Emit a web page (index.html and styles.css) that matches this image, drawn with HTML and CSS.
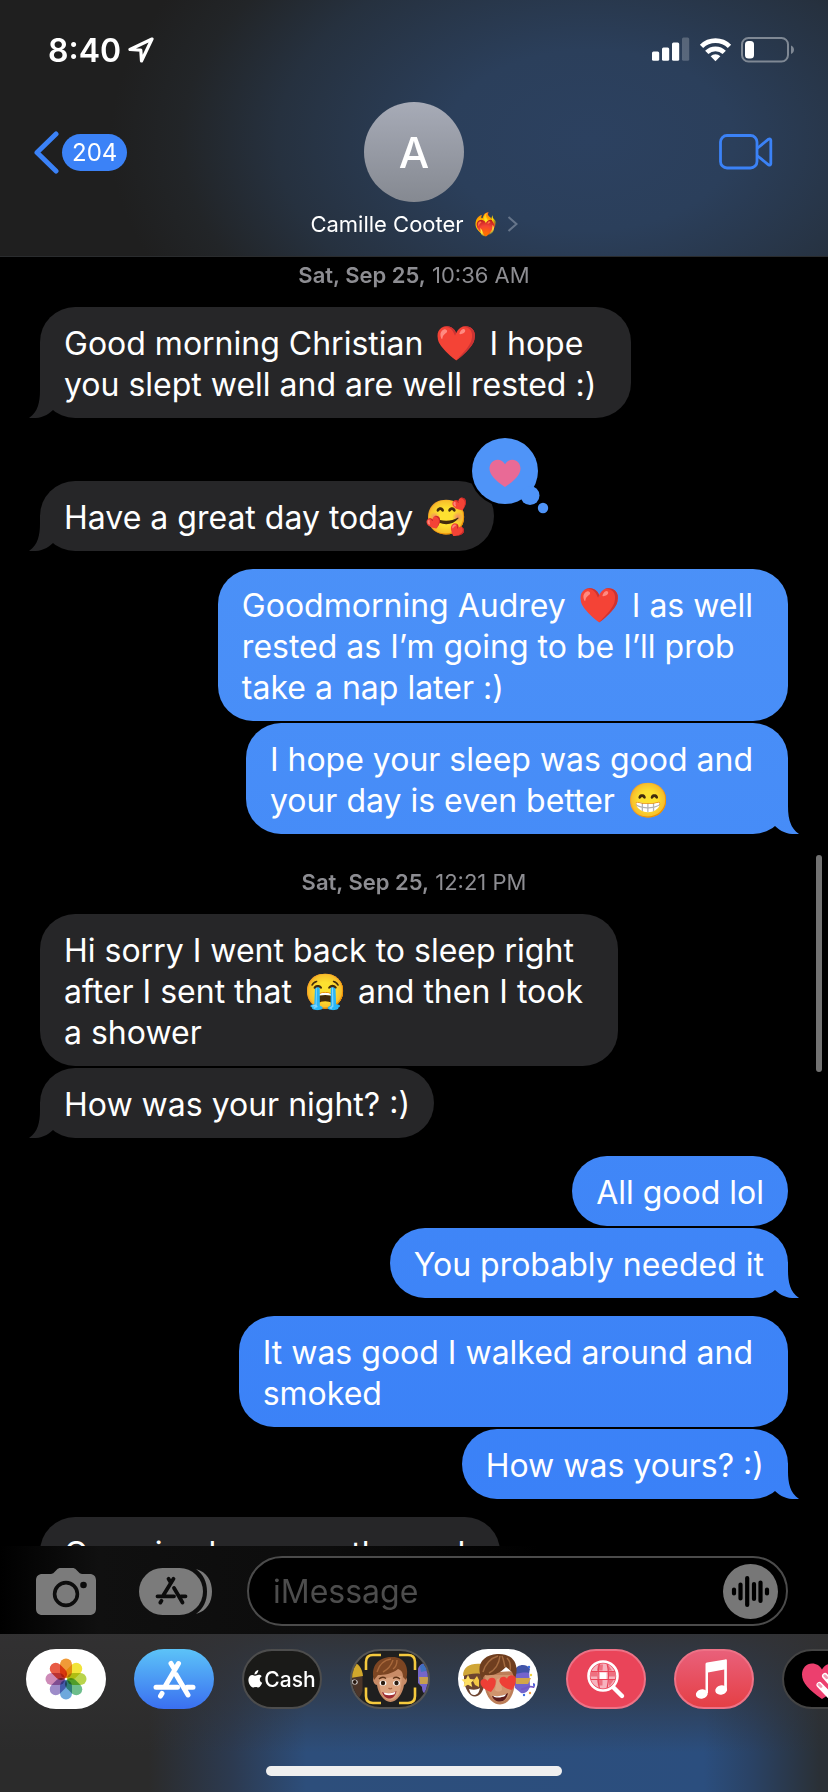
FILE: index.html
```html
<!DOCTYPE html>
<html lang="en">
<head>
<meta charset="utf-8">
<meta name="viewport" content="width=device-width, initial-scale=1">
<title>Messages</title>
<link rel="stylesheet" href="styles.css">
</head>
<body>
<header class="header">
  <div class="status">
    <span class="time">8:40</span>
    <svg class="loc" width="26" height="26" viewBox="0 0 26 26" fill="none" stroke="#fff" stroke-width="3.2" stroke-linejoin="round"><path d="M24 2 2 12.500 12.800 13.200 13.500 24Z"/></svg>
    <span class="signals">
      <svg width="38" height="24" viewBox="0 0 38 24" fill="#fff"><rect y="14.500" width="7.200" height="9.200" rx="1.500"/><rect x="10" y="10.500" width="7.200" height="13.200" rx="1.500"/><rect x="20" y="5.500" width="7.200" height="18.200" rx="1.500"/><rect x="30" y=".5" width="7.200" height="23.200" rx="1.500" opacity=".22"/></svg>
      <svg width="33" height="25" viewBox="0 0 34 25" fill="none" stroke="#fff" stroke-width="4.800"><path d="M2.600 9.200a20.500 20.500 0 0 1 28.800 0"/><path d="M8 15.500a12.800 12.800 0 0 1 18 0"/><path d="M12 19.500a7.200 7.200 0 0 1 10 0L17 24.500Z" fill="#fff" stroke="none"/></svg>
      <svg width="54" height="26" viewBox="0 0 54 26"><rect x="1" y="1" width="46" height="23.500" rx="6.500" fill="none" stroke="#7f8894" stroke-width="2"/><rect x="4" y="4" width="9" height="17.500" rx="3.500" fill="#fff"/><path d="M50 8.500c4 1.500 4 7 0 8.500Z" fill="#7f8894"/></svg>
    </span>
  </div>
  <nav class="nav">
    <button class="back" type="button" aria-label="Back">
      <svg width="25" height="43" viewBox="0 0 25 43" fill="none" stroke="#3b82f7" stroke-width="5" stroke-linecap="round" stroke-linejoin="round"><path d="M22 3 3 21.500 22 40"/></svg>
      <span class="count">204</span>
    </button>
    <button class="contact" type="button">
      <span class="avatar">A</span>
      <span class="name">Camille Cooter <span class="heart">❤️‍🔥</span>
        <svg width="11" height="16" viewBox="0 0 11 16" fill="none" stroke="#66758a" stroke-width="2"><path d="M1.500 1 9.500 8 1.500 15"/></svg>
      </span>
    </button>
    <button class="video" type="button" aria-label="FaceTime">
      <svg width="54" height="36" viewBox="0 0 54 36" fill="none" stroke="#3b82f7" stroke-width="2.800" stroke-linejoin="round"><rect x="1.500" y="1.500" width="36.500" height="32.500" rx="6.500"/><path d="M38 14.500 49.500 5.200c1.200-.8 2.300-.3 2.300 1v23.600c0 1.300-1.100 1.800-2.300 1L38 21.500"/></svg>
    </button>
  </nav>
</header>

<main class="thread">
  <p class="stamp first"><b>Sat, Sep 25,</b> 10:36 AM</p>
  <div class="msg in tail multi">Good morning Christian <span class="em">❤️</span> I hope<br>you slept well and are well rested :)</div>
  <div class="msg in tail reacted">Have a great day today <span class="em">🥰</span>
    <svg class="reaction" role="img" aria-label="Loved" width="80" height="80" viewBox="0 0 80 80"><circle cx="35" cy="35" r="35.500" fill="#000"/><g fill="#4f94f8"><circle cx="35" cy="35" r="33"/><circle cx="60" cy="59.500" r="9.500"/><circle cx="73" cy="72" r="5.200"/></g><path d="M35 51C25 44.500 19.500 38.500 19.500 32.500c0-5 3.600-8.800 8-8.800 3.400 0 6 1.800 7.500 4.600 1.500-2.800 4.100-4.600 7.500-4.600 4.400 0 8 3.800 8 8.800C50.500 38.500 45 44.500 35 51Z" fill="#e96a96"/></svg>
  </div>
  <div class="msg out multi">Goodmorning Audrey <span class="em">❤️</span> I as well<br>rested as I’m going to be I’ll prob<br>take a nap later :)</div>
  <div class="msg out tail multi joined">I hope your sleep was good and<br>your day is even better <span class="em">😁</span></div>
  <p class="stamp"><b>Sat, Sep 25,</b> 12:21 PM</p>
  <div class="msg in multi">Hi sorry I went back to sleep right<br>after I sent that <span class="em">😭</span> and then I took<br>a shower</div>
  <div class="msg in tail joined">How was your night? :)</div>
  <div class="msg out">All good lol</div>
  <div class="msg out tail joined">You probably needed it</div>
  <div class="msg out multi">It was good I walked around and<br>smoked</div>
  <div class="msg out tail joined">How was yours? :)</div>
  <div class="msg in multi">Ooo nice how was the end</div>
  <div class="scrollbar"></div>
</main>

<form class="composer">
  <button type="button" aria-label="Camera">
    <svg width="60" height="47" viewBox="0 0 60 47"><path d="M6.500 6H15c1.200 0 2-.4 3-1.400L21 1.500C22 .5 23 0 24.500 0h12C38 0 39 .5 40 1.500l3 3.100C44 5.600 44.800 6 46 6h7.500C57.800 6 60 8.200 60 12.500v28c0 4.300-2.200 6.500-6.500 6.500h-47C2.200 47 0 44.800 0 40.500v-28C0 8.200 2.200 6 6.500 6Z" fill="#7b7b7b"/><circle cx="30" cy="26" r="11.400" fill="none" stroke="#0c0c0c" stroke-width="3.600"/><circle cx="47.500" cy="17" r="3.300" fill="#0c0c0c"/></svg>
  </button>
  <button type="button" aria-label="Apps">
    <svg width="74" height="47" viewBox="0 0 74 47"><rect width="64" height="47" rx="23.500" fill="#7b7b7b"/><path d="M57 1C68 4 73 13 73 23.500S68 43 57 46c7.500-5.500 11-13 11-22.500S64.500 6.500 57 1Z" fill="#7b7b7b"/><g fill="none" stroke="#0c0c0c" stroke-width="3.800" stroke-linecap="round"><path d="M29.500 10.800 32 15M34.500 10.800 24.500 27M18.500 28.300H35M35 20 43.500 34.500M42 28.300h4.500M22.500 32.800l-1.200 1.800"/></g></svg>
  </button>
  <div class="field">
    <input type="text" placeholder="iMessage" aria-label="iMessage">
    <button type="button" aria-label="Record audio">
      <svg width="55" height="55" viewBox="0 0 55 55"><circle cx="27.500" cy="27.500" r="27.500" fill="#777"/><path d="M11 25.500v4M17.500 20.500v14M24.200 14v27M31 20v15M37.500 18.500v18.500M44 25.500v4" stroke="#000" stroke-width="4.200" stroke-linecap="round"/></svg>
    </button>
  </div>
</form>

<footer class="drawer">
  <div class="apps">
    <button class="app photos" type="button" aria-label="Photos"><svg width="42" height="42" viewBox="-21 -21 42 42"><g class="petals"><rect x="-6" y="-20.500" width="12" height="19.500" rx="6" fill="#f09a37"/><rect x="-6" y="-20.500" width="12" height="19.500" rx="6" fill="#f2e43a" transform="rotate(45)"/><rect x="-6" y="-20.500" width="12" height="19.500" rx="6" fill="#b9d44c" transform="rotate(90)"/><rect x="-6" y="-20.500" width="12" height="19.500" rx="6" fill="#6dbd8b" transform="rotate(135)"/><rect x="-6" y="-20.500" width="12" height="19.500" rx="6" fill="#6ea8dc" transform="rotate(180)"/><rect x="-6" y="-20.500" width="12" height="19.500" rx="6" fill="#9d8cc9" transform="rotate(225)"/><rect x="-6" y="-20.500" width="12" height="19.500" rx="6" fill="#cd8bb8" transform="rotate(270)"/><rect x="-6" y="-20.500" width="12" height="19.500" rx="6" fill="#e85b45" transform="rotate(315)"/></g></svg></button>
    <button class="app store" type="button" aria-label="App Store"><svg width="44" height="40" viewBox="0 0 44 40" fill="none" stroke="#fff" stroke-width="5" stroke-linecap="round"><path d="M19 4.500 22 9.500M26.500 4.500 13 27.500M4 28.300H25.500M24 15.500 36 36M35 28.300h6M10 34.500l-1.500 2.500"/></svg></button>
    <button class="app cash" type="button"><svg width="15" height="18" viewBox="0 0 15 18" fill="#fff"><path d="M10.300 0c.1 1.300-.4 2.400-1.100 3.200-.7.800-1.700 1.300-2.700 1.200C6.400 3.200 6.900 2.100 7.600 1.400 8.300.6 9.400.1 10.300 0ZM13.700 6.200c-1.300.8-1.900 1.800-1.900 3.200 0 1.600.9 2.800 2.400 3.400-.7 2-2.200 4.700-3.800 4.700-1 0-1.400-.6-2.700-.6s-1.700.6-2.700.6C3 17.500.4 13.600.4 10 .4 6.800 2.300 4.900 4.400 4.900c1.200 0 2.200.8 3.100.8.800 0 2-.9 3.400-.9 1 0 2.100.5 2.800 1.400Z"/></svg>Cash</button>
    <button class="app dark" type="button" aria-label="Memoji camera">
      <svg width="76" height="56" viewBox="2 2 76 56">
        <path d="M0 24h12.500v18c-1.500 5-4 8-7 9H0Z" fill="#4b3529"/><ellipse cx="4.500" cy="33" rx="3.200" ry="2.600" fill="#ddd"/><circle cx="4.800" cy="33" r="1.900" fill="#26170f"/><path d="M0 14c6-2 12 3 13 13L0 29Z" fill="#d2a82c"/>
        <path d="M68 20c1-4 5-7 12-6v32c-6 0-8-3-8-8l-4-4Z" fill="#7566c9"/><path d="M70 17c3-3 6-4 10-3v7l-9 2Z" fill="#3e70bd"/><path d="M69 28h11v7H70Z" fill="#c7a04e"/>
        <path d="M26 27c-4-1-4 8 1 9 1 8 7 17 13.500 17S53 44 54 36c4-2 4-9 0-8V18H26Z" fill="#c98c67"/><path d="M29 30c0 12 4 21 11.500 21S52 42 51.500 27Z" fill="#dba37e"/>
        <path d="M24 31C20 17 29 8 41 8c13-1 19 10 15 23l-3-3c0-5-2-7-5-8-6 5-14 6-20 6Z" fill="#7c4522"/><path d="M27 23c2-7 7-12 14-13M33 23c4-2 8-6 10-12M43 20c3-2 4-5 4-9" fill="none" stroke="#a8683b" stroke-width="1.400"/>
        <ellipse cx="33" cy="34" rx="3.400" ry="2.600" fill="#fff"/><ellipse cx="46.500" cy="34" rx="3.400" ry="2.600" fill="#fff"/><circle cx="33" cy="34" r="2.200" fill="#2a1c10"/><circle cx="46.500" cy="34" r="2.200" fill="#2a1c10"/><path d="M29 30c2-2 5-2 7-.5M43 29.500c2-1.500 5-1.500 7 .5" stroke="#5d3216" stroke-width="1.300" fill="none"/><path d="M38.500 39c1 1 2.500 1 3.500 0" stroke="#a96645" stroke-width="1.300" fill="none"/><path d="M32 43c5 2 10 1.500 14.500-1-1 5-4 8-8 7.500-3-.3-5.500-3-6.500-6.500Z" fill="#9d2c31"/><path d="M33.500 43.500c4 1.300 8 1 12-.8l-1 2.500c-3 1.200-7 1.300-9.800.3Z" fill="#fff"/>
        <path d="M31 6h-8c-4.500 0-7 2.500-7 7v8M49 6h9c4.500 0 7 2.500 7 7v8M16 38.500V47c0 4.500 2.500 7 7 7h8M65 38.500V47c0 4.500-2.500 7-7 7h-9" fill="none" stroke="#f5c93d" stroke-width="2.600"/>
      </svg>
    </button>
    <button class="app white" type="button" aria-label="Memoji stickers">
      <svg width="76" height="56" viewBox="2 2 76 56">
        <path d="M6 24h20v14c-2 6-5 9.500-9 9.500-6 0-10-8-11-16Z" fill="#6d4430"/><path d="M11 40c4 1 8 1 11-1-1 5-3 7-6 7s-4-3-5-6Z" fill="#fff"/><path d="M5 27c0-9 7-13 18-12v10C17 24 11 25 5 27Z" fill="#d0a637"/><path d="m10 26 2 4 4.500.5-3.300 3 1 4.500-4.200-2.200L5.500 38l1-4.500-3-3 4.500-.5Z" fill="#ffdf62"/><path d="m19 27 2 4v7l-4-2-2-4Z" fill="#f6c945"/>
        <path d="M57 21c3-5 12-5 14 0l1 16c-1 5-5 8-9 7l-6-5Z" fill="#7464cc"/><path d="M57 22c1-7 12-8 15-2l-1 4c-4-1-9 0-14 1Z" fill="#4154a8"/><path d="M57 29h16l-3 6H58Z" fill="#d3a648"/><path d="M63 40c4 1 7-4 12-2 2 1 2-3 0-3" fill="none" stroke="#7358c8" stroke-width="1.800"/><g fill="#3c6ce0"><circle cx="71" cy="18" r="1.200"/><circle cx="66" cy="46" r="1.200"/><circle cx="76" cy="36" r="1"/></g><circle cx="73" cy="26" r="1.200" fill="#f3d33c"/><circle cx="72" cy="44" r="1.200" fill="#ef9b42"/>
        <path d="M25 24c0 16 5 31 17 31.500C52 55 58 44 57.500 22Z" fill="#bd7e58"/><path d="M27 26c1 15 6 27 15 27 8 0 13-11 13-27Z" fill="#d0946d"/><path d="M39 30l-2 11c2 2 5 2 7 0l-1-12" fill="#dda47f"/>
        <path d="M24 30C17 16 25 6 39 5c16-1 23 10 18 25l-3-7-6-5c-6 6-12 9-21 8Z" fill="#6f3e1f"/><path d="M25 23c2-8 8-14 15-16M31 24c6-3 10-9 11-17M47 18c-1-4-1-7-3-11M52 21c1-5 0-9-3-12" fill="none" stroke="#a36a3f" stroke-width="1.500"/>
        <path d="M34 47c6 1 11 0 16-3-1 5-4 8.500-8 8.500s-7-2-8-5.500Z" fill="#5b1d1c"/><path d="M35 46.800c5 1 9 0 13-1.800l-1 2c-3 1.500-7 2-10.500 1Z" fill="#fff"/>
        <path d="M33 43c-6-2-10-5-10.500-9-.4-4 5-5.500 7-2 1.500-4.500 8-4.500 8.300 0 .2 4-2 8-4.800 11Z" fill="#ee3f36"/><path d="M53.500 41c-6-1.500-11-4.500-12-8.500-.8-4.500 5-6.500 7.500-2.700 1.500-4.700 8-4.800 8.800-.3.600 4-1.500 8.500-4.300 11.500Z" fill="#ee3f36"/>
      </svg>
    </button>
    <button class="app images" type="button" aria-label="#images">
      <svg width="76" height="56" viewBox="2 2 76 56"><circle cx="37" cy="27" r="12.500" fill="#f6b3be"/><path d="M32 15.500l5 0-.5 6H31ZM42 15.500l4 6h-4ZM24.500 22H31v5.500h-6.500ZM43 22h6v5.500h-6ZM31 30.500h5.500v6H32ZM43 30.500h5l-4 6h-1Z" fill="#ee7080"/><path d="M34 23.500h6.500v6.500H34Z" fill="#fff"/><path d="M33.500 14q-3 12 0 26M41 14q3 12 0 26M25 22.500h24M25 30.500h24" stroke="#ea4459" stroke-width="1.200" fill="none"/><circle cx="37" cy="27" r="14.500" fill="none" stroke="#fff" stroke-width="2.600"/><path d="M47.500 38.500 56 47" stroke="#fff" stroke-width="4.400" stroke-linecap="round"/></svg>
    </button>
    <button class="app music" type="button" aria-label="Music">
      <svg width="76" height="56" viewBox="2 2 76 56" fill="#fff"><path d="M31.500 15.200c0-1 .6-1.600 1.500-1.800l18.300-3c1-.2 1.600.3 1.600 1.200V40h-2.700V20.500L34 23.500V44h-2.500Z"/><ellipse cx="27.800" cy="45" rx="6" ry="4.600" transform="rotate(-12 27.800 45)"/><ellipse cx="47.200" cy="41" rx="6" ry="4.600" transform="rotate(-12 47.200 41)"/></svg>
    </button>
    <button class="app black" type="button" aria-label="Digital Touch">
      <svg width="76" height="56" viewBox="2 2 76 56"><path d="M40 50C27 41 20 34 20 25.500 20 19 24.500 14.500 30 14.500c4.500 0 8 2.300 10 6 2-3.700 5.500-6 10-6 5.500 0 10 4.500 10 11C60 34 53 41 40 50Z" fill="#ec3f6e"/><path d="M37.500 36 48 47M43 27 55 41" stroke="#fff" stroke-width="6" stroke-linecap="round"/><path d="M37 35.500l2 2M42.800 26.800l2 2" stroke="#f29ab4" stroke-width="2.800" stroke-linecap="round"/></svg>
    </button>
  </div>
  <div class="home"></div>
</footer>
</body>
</html>
```
FILE: styles.css
```css
* { box-sizing: border-box; }
body { margin: 0; height: 100vh; display: flex; flex-direction: column; background: #000; color: #fff; font-family: Inter, sans-serif; overflow: hidden; }
button { border: 0; padding: 0; background: none; color: inherit; font: inherit; display: flex; align-items: center; }
svg { display: block; flex: none; }
.header { height: 257px; flex: none; padding: 0 34px; border-bottom: 1px solid #2a2c2e; background: radial-gradient(ellipse 480px 300px at 590px 140px, #2c4160 0%, #2b3f5b 30%, #26313f 65%, #222528 85%, #1f1f1f 100%); }
.status { display: flex; align-items: center; height: 100px; padding-left: 14px; }
.time { font-size: 32px; font-weight: 600; }
.loc { margin-left: 7px; }
.signals { margin-left: auto; margin-right: -1px; display: flex; gap: 9px; }
.nav { display: grid; grid-template-columns: 1fr auto 1fr; padding-top: 2px; }
.back { gap: 3px; height: 100px; }
.count { height: 37px; line-height: 37px; padding: 0 10px; border-radius: 19px; background: #3b82f7; font-size: 24px; }
.contact { flex-direction: column; gap: 7px; }
.avatar { width: 100px; height: 100px; border-radius: 50%; background: linear-gradient(#a7abb7, #858991); font-size: 43px; font-weight: 500; line-height: 100px; text-align: center; }
.name { display: flex; align-items: center; gap: 8px; font-size: 22px; line-height: 30px; }
.video { height: 100px; justify-content: flex-end; padding-right: 21px; }
.thread { flex: 1; min-height: 0; overflow: hidden; position: relative; display: flex; flex-direction: column; padding: 0 40px; }
.stamp { margin: 32px 0 16px; text-align: center; color: #8d8d92; font-size: 22px; line-height: 32px; flex: none; }
.stamp.first { margin-top: 2px; }
.stamp b { font-weight: 600; }
.msg { position: relative; flex: none; padding: 16px 24px 13px; border-radius: 35px; font-size: 32px; line-height: 41px; white-space: nowrap; margin-top: 18px; }
.em { margin: 0 3px; font-size: 34px; line-height: 1; }
.stamp + .msg { margin-top: 0; }
.msg.multi { padding-right: 35px; }
.msg.joined { margin-top: 2px; }
.in { align-self: flex-start; background: #262628; }
.out { align-self: flex-end; background: linear-gradient(#559af8, #357cf7) fixed; }
.tail::after { content: ""; position: absolute; left: -11px; bottom: 0; width: 25px; height: 36px; background: inherit; clip-path: path("M11 0V8C11 20 9 30 0 36C10 37 18 34 24 28V0Z"); }
.out.tail::after { left: auto; right: -11px; clip-path: path("M14 0V8C14 20 16 30 25 36C15 37 7 34 1 28V0Z"); }
.msg.reacted { margin-top: 63px; }
.reaction { position: absolute; right: -56px; top: -45px; overflow: visible; }
.scrollbar { position: absolute; right: 6px; top: 598px; width: 6px; height: 217px; border-radius: 3px; background: #727272; }
.composer { flex: none; display: flex; align-items: center; padding: 10px 40px 8px 36px; background: linear-gradient(90deg, #000, #101010 12%, #0c0c0c 40%, #000 65%); }
.field { flex: 1; min-width: 0; height: 70px; margin-left: 34px; display: flex; align-items: center; border: 2px solid #4b4b4b; border-radius: 35px; padding: 0 8px 0 24px; background: #000; }
.composer > button + button { margin-left: 43px; }
.field input { flex: 1; min-width: 0; width: 100%; border: 0; outline: 0; padding: 0; background: none; color: #fff; font: 32px Inter, sans-serif; }
.field input::placeholder { color: #4d4d4d; opacity: 1; }
.drawer { flex: none; height: 158px; padding: 15px 0 16px 26px; display: flex; flex-direction: column; justify-content: space-between; overflow: hidden; background: linear-gradient(rgba(50, 49, 50, .92), rgba(50, 49, 50, .5) 40%, rgba(44, 44, 44, 0) 75%), linear-gradient(90deg, #2b2b2b 18%, #2c3a50 28%, #2d4e7b 37%, #2b4e7e 85%, #2a4264 91%, #2a3036 99%); }
.apps { display: flex; gap: 28px; }
.app { flex: none; width: 80px; height: 60px; border-radius: 30px; justify-content: center; border: 2px solid transparent; overflow: hidden; }
.photos, .white { background: #fff; }
.petals { isolation: isolate; }
.petals rect { mix-blend-mode: multiply; }
.store { background: linear-gradient(#5cc3f8, #3a6ff0) border-box; }
.cash { background: #1a1a18; border-color: #4d4d4d; font-size: 21px; font-weight: 500; gap: 1px; }
.dark { background: #1f1f1f; border-color: #555; }
.images { background: #ea4459; border-color: #ee7286; }
.music { background: linear-gradient(#e9607a, #e53f45); border-color: #ee7286; }
.black { background: #000; border-color: #444; }
.home { align-self: center; width: 296px; height: 10px; margin-right: 26px; border-radius: 5px; background: #efefef; }
```
